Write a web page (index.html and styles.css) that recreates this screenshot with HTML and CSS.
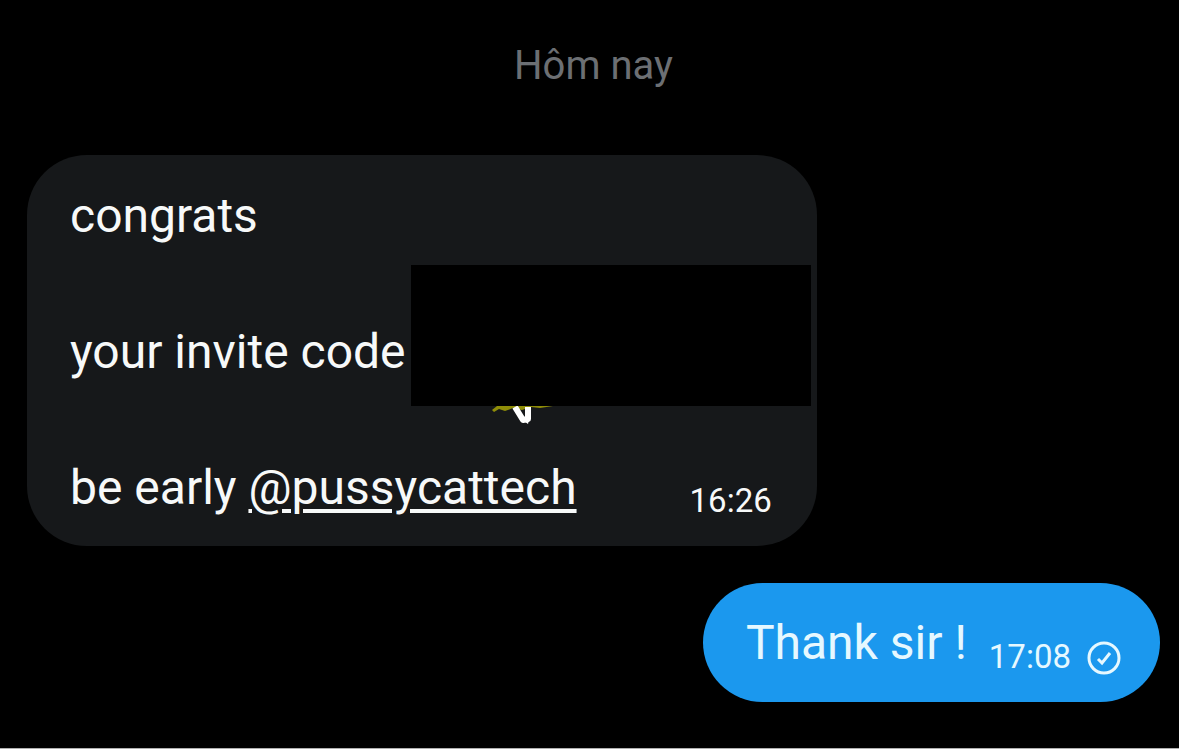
FILE: index.html
```html
<!DOCTYPE html>
<html lang="vi">
<head>
<meta charset="utf-8">
<meta name="viewport" content="width=device-width, initial-scale=1">
<title>Tin nhắn</title>
<link rel="stylesheet" href="styles.css">
</head>
<body>
<main class="chat">
  <h1 class="day">Hôm nay</h1>
  <article class="bubble received">
    <div class="text">
      <p>congrats</p>
      <p><span class="code">your invite code<span class="redaction"></span><svg class="scribble" viewBox="0 0 64 20" aria-hidden="true"><path d="M1 4 6 0H62L49 2 40 1 31 4 22 2 14 5 8 3 3 6Z" fill="#8f8d08"/><path d="M24 1 32 14 37 13 37 1" fill="none" stroke="#fff" stroke-width="6" stroke-linejoin="round"/><path d="M30 13 37 18 39 9Z" fill="#fff"/></svg></span></p>
      <p>be early <a href="#pussycattech">@pussycattech</a></p>
    </div>
    <time class="time">16:26</time>
  </article>
  <article class="bubble sent">
    <p>Thank sir !</p>
    <time class="time">17:08</time>
    <svg class="check" viewBox="0 0 34 34" role="img" aria-label="Đã gửi" fill="none" stroke="#e6f8ff"><circle cx="17" cy="17" r="15" stroke-width="3"/><path d="M11 18 15 22 23 12" stroke-width="3"/></svg>
  </article>
</main>
</body>
</html>
```
FILE: styles.css
```css
* { box-sizing: border-box; margin: 0; }
body { background: #000; color: #f7f9f9; font: 48px/68px Roboto, "Liberation Sans", sans-serif; }
.chat {
  display: flex;
  flex-direction: column;
  min-height: 100vh;
  padding: 41px 19px 40px 27px;
  border-bottom: 1px solid #b0b0b0;
}
.day {
  margin-bottom: 64px;
  color: #6c6f73;
  font-size: 40px;
  font-weight: 400;
  line-height: 50px;
  text-align: center;
}
.bubble { display: flex; align-items: flex-end; }
.received {
  align-self: flex-start;
  gap: 113px;
  padding: 27px 45px 24px 43px;
  border-radius: 60px;
  background: #16181a;
  justify-content: space-between;
}
.text { display: grid; gap: 68px; }
.text a { color: inherit; text-decoration-thickness: 4px; text-underline-offset: 5px; }
.code { position: relative; display: inline-block; padding-right: 5px; }
.redaction { position: absolute; left: 100%; top: -53px; width: 400px; height: 141px; background: #000; }
.scribble { position: absolute; left: 100%; top: 88px; width: 64px; height: 20px; margin-left: 80px; }
.time { font-size: 33px; line-height: 40px; }
.received .time { margin-bottom: 1px; }
.sent {
  align-self: flex-end;
  margin-top: 37px;
  padding: 26px 39px 25px 43px;
  border-radius: 60px;
  background: #1b98ee;
  color: #e6f8ff;
}
.sent .time { margin: 0 16px 0 22px; }
.check { width: 34px; height: 34px; margin-bottom: 2px; }
```
